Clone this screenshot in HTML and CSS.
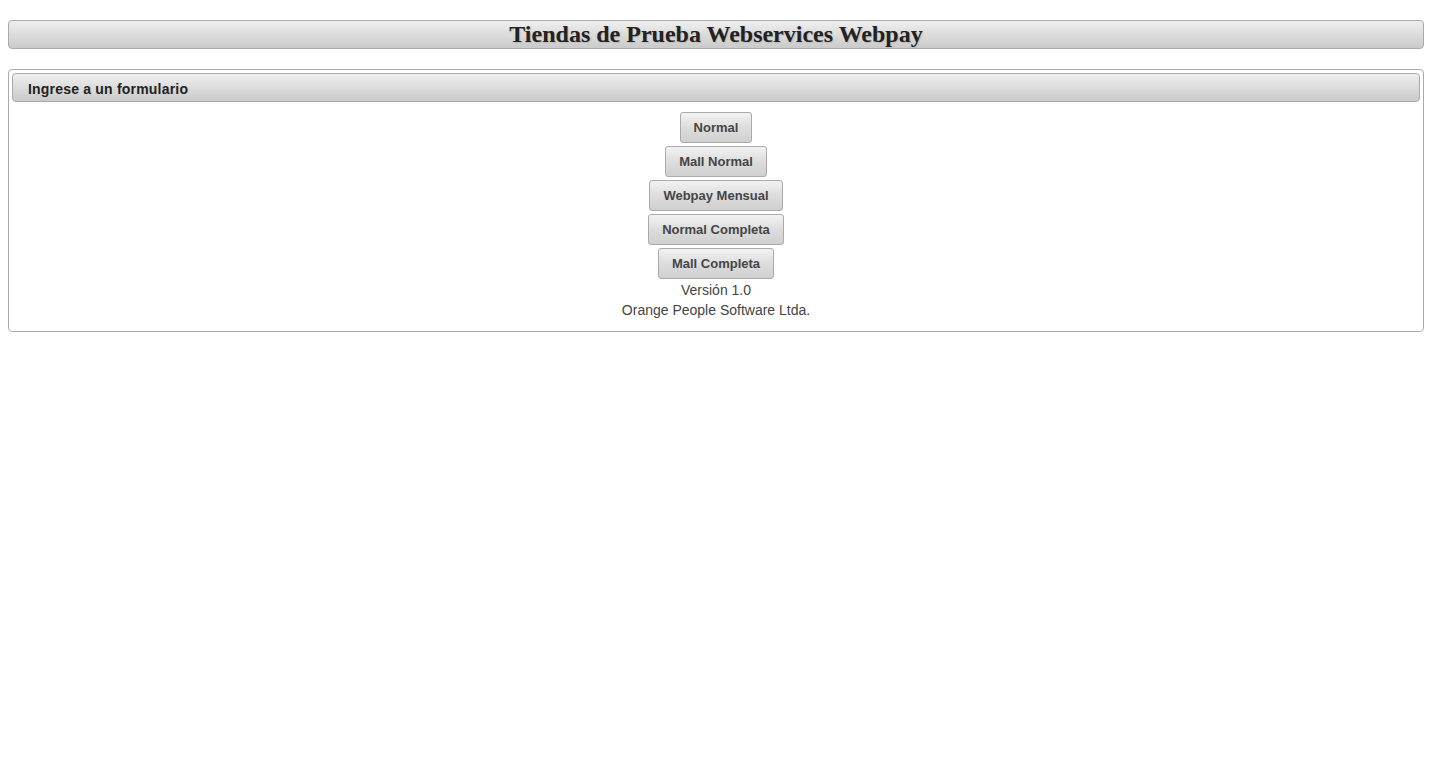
FILE: index.html
```html
<!DOCTYPE html>
<html lang="es">
  <head>
    <meta charset="UTF-8" />
    <meta name="viewport" content="width=device-width, initial-scale=1.0" />
    <title>Tiendas de Prueba Webservices Webpay</title>
    <link rel="stylesheet" href="styles.css">
  </head>
  <body>
    <h1 class="title-bar">Tiendas de Prueba Webservices Webpay</h1>
    <div class="panel">
      <div class="panel-header">Ingrese a un formulario</div>
      <div class="panel-content">
        <button class="form-button">Normal</button>
        <button class="form-button">Mall Normal</button>
        <button class="form-button">Webpay Mensual</button>
        <button class="form-button">Normal Completa</button>
        <button class="form-button">Mall Completa</button>
        <div class="footer-text">Versión 1.0</div>
        <div class="footer-text">Orange People Software Ltda.</div>
      </div>
    </div>
  </body>
</html>
```

FILE: styles.css
```css
body {
  margin: 0;
  padding: 20px 8px 8px;
  font-family: "Liberation Sans", Arial, sans-serif;
  color: #333;
  background: #fff;
}

.title-bar {
  margin: 0 0 20px;
  height: 27px;
  line-height: 27px;
  border: 1px solid #aaa;
  border-radius: 4px;
  background: linear-gradient(to bottom, #efefef 0%, #dcdcdc 50%, #cacaca 100%);
  color: #222;
  font-family: "Liberation Serif", "Times New Roman", serif;
  font-size: 24px;
  font-weight: bold;
  text-align: center;
  text-shadow: 1px 1px 1px #bbb;
}

.panel {
  border: 1px solid #aaa;
  border-radius: 4px;
  padding: 3px;
}

.panel-header {
  height: 27px;
  line-height: 30px;
  padding-left: 15px;
  border: 1px solid #aaa;
  border-radius: 4px;
  background: linear-gradient(to bottom, #efefef 0%, #dcdcdc 50%, #cacaca 100%);
  color: #222;
  font-size: 14px;
  font-weight: bold;
  letter-spacing: 0.2px;
}

.panel-content {
  display: flex;
  flex-direction: column;
  align-items: center;
  gap: 3px;
  padding: 10px 0 8px;
}

.form-button {
  height: 31px;
  padding: 0 13px;
  border: 1px solid #aaa;
  border-radius: 3px;
  background: linear-gradient(to bottom, #f2f2f2 0%, #dddddd 50%, #cfcfcf 100%);
  color: #454545;
  font-family: "Liberation Sans", Arial, sans-serif;
  font-size: 13px;
  font-weight: bold;
  cursor: pointer;
}

.form-button:hover {
  background: #dadada;
}

.footer-text {
  font-size: 14px;
  line-height: 20px;
  color: #444;
}

.form-button + .footer-text {
  margin-top: -2px;
}

.footer-text + .footer-text {
  margin-top: -3px;
}
```
